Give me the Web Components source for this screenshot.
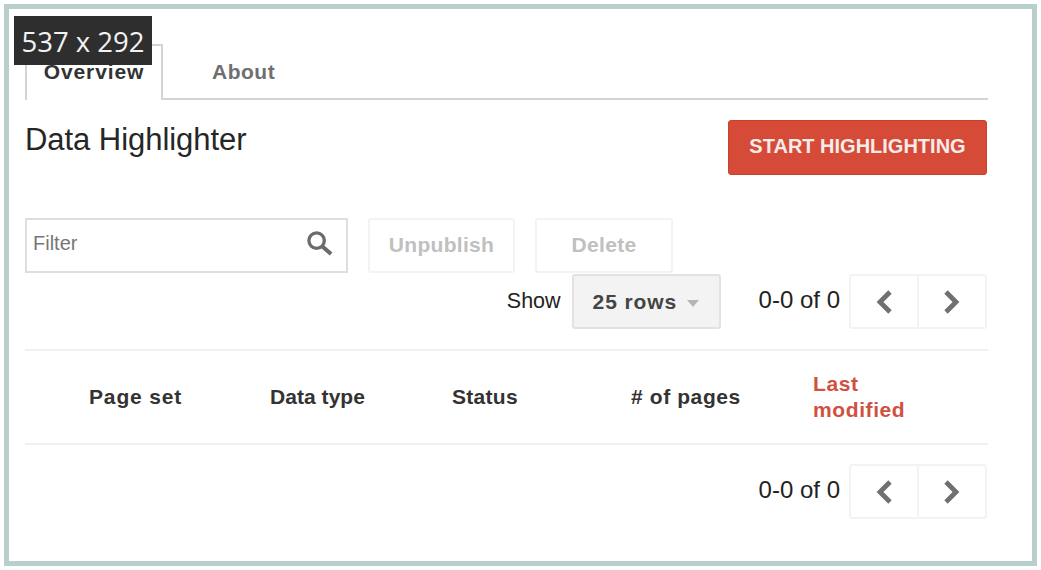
<!DOCTYPE html>
<html>
<head>
<meta charset="utf-8">
<style>
html, body { margin: 0; padding: 0; background: #fff; }
body { width: 1041px; height: 570px; overflow: hidden; font-family: "Liberation Sans", Arial, sans-serif; }
</style>
</head>
<body>
<dh-frame>
	<dh-tabs></dh-tabs>
	<dh-head></dh-head>
	<dh-toolbar></dh-toolbar>
	<dh-rowbar></dh-rowbar>
	<dh-columns></dh-columns>
	<dh-pager class="bottom"></dh-pager>
</dh-frame>
<script>
var chevron = function(d) {
	return `<svg width="20" height="26" viewBox="0 0 20 26"><path d="${d}" fill="none" stroke="#707070" stroke-width="4.8"/></svg>`
}
function define(name, css, html) {
	customElements.define(name, class extends HTMLElement {
		constructor() {
			super()
			var shadow = this.attachShadow({mode:'open'})
			shadow.innerHTML = `<style>${css}</style>${html}`
		}
	})
}
define('dh-frame', `
:host { display: block; box-sizing: border-box; position: relative; width: 1033px; height: 562px; margin: 4px 0 0 4px;
	border: 5px solid #b9cfcc; padding: 35px 44px 0 16px; background: #fff; }
.size { position: absolute; left: 5px; top: 7px; width: 138px; height: 49px; box-sizing: border-box; background: #2e2e2e; color: #f2f2f2;
	font: 27.5px/52px "Open Sans", sans-serif; text-align: center; white-space: nowrap; }
`, `<div class="size">537 x 292</div><slot></slot>`)
define('dh-tabs', `
:host { display: flex; height: 56px; box-sizing: border-box; border-bottom: 2px solid #d4d4d4; font: bold 21px/56px "Liberation Sans", sans-serif; letter-spacing: .5px; }
div { box-sizing: border-box; text-align: center; height: 56px; }
.on { width: 138px; border: 2px solid #d4d4d4; border-bottom: 0; background: #fff; color: #333; line-height: 52px; letter-spacing: .9px; }
.off { margin-left: 49px; color: #6f6f6f; }
`, `<div class="on">Overview</div><div class="off">About</div>`)
define('dh-head', `
:host { display: flex; justify-content: space-between; align-items: flex-start; padding-top: 20px; height: 98px; }
h1 { margin: 0; font: 31px/40px "Liberation Sans", sans-serif; letter-spacing: -.05px; color: #262626; }
button { width: 259px; height: 55px; margin-right: 1px; border: 1px solid #c9402e; border-radius: 3px; background: #d64a38; color: #f7ecea;
	font: bold 20px "Liberation Sans", sans-serif; padding: 0 0 2px; }
`, `<h1>Data Highlighter</h1><button>START HIGHLIGHTING</button>`)
define('dh-toolbar', `
:host { display: flex; gap: 20px; height: 56px; }
.filter { display: flex; align-items: center; justify-content: space-between; box-sizing: border-box; width: 323px; height: 55px; border: 2px solid #dedede;
	padding: 0 13px 5px 6px; color: #777; font: 20px "Liberation Sans", sans-serif; }
.btn { box-sizing: border-box; height: 55px; border: 2px solid #f3f3f3; border-radius: 3px; color: #c0c0c0; text-align: center;
	font: bold 21px/50px "Liberation Sans", sans-serif; letter-spacing: .3px; }
.a { width: 147px; } .b { width: 138px; }
`, `<div class="filter"><span>Filter</span><svg width="27" height="27" viewBox="0 0 28 28"><circle cx="11" cy="11" r="8" fill="none" stroke="#6b6b6b" stroke-width="3.4"/><path d="M17 17l9 8" stroke="#6b6b6b" stroke-width="4.2" fill="none"/></svg></div>
<div class="btn a">Unpublish</div><div class="btn b">Delete</div>`)
define('dh-pager', `
:host { display: flex; align-items: center; justify-content: flex-end; gap: 9px; padding-right: 1px; }
span { font: 24px "Liberation Sans", sans-serif; color: #222; padding-bottom: 3px; }
.box { display: flex; width: 138px; height: 55px; box-sizing: border-box; border: 2px solid #f3f3f3; border-radius: 3px; }
.box div { flex: 1; display: flex; align-items: center; justify-content: center; }
.box div + div { border-left: 2px solid #f3f3f3; }
`, `<span>0-0 of 0</span><div class="box"><div>${chevron('M16 3 L6 13 L16 23')}</div><div>${chevron('M4 3 L14 13 L4 23')}</div></div>`)
define('dh-rowbar', `
:host { display: flex; justify-content: flex-end; align-items: center; height: 55px; }
.show { font: 21.5px "Liberation Sans", sans-serif; color: #222; margin-right: 11px; }
.sel { display: flex; align-items: center; box-sizing: border-box; width: 149px; height: 55px; margin-right: 38px; padding-left: 19px; background: #f3f3f3;
	border: 2px solid #e2e2e2; border-radius: 3px; color: #444; font: bold 21px "Liberation Sans", sans-serif; letter-spacing: .9px; }
.arrow { width: 0; height: 0; margin-left: 10px; margin-top: 3px; border: 6px solid transparent; border-top: 7px solid #b5b5b5; border-bottom: 0; }
`, `<span class="show">Show</span><div class="sel">25 rows<i class="arrow"></i></div><dh-pager></dh-pager>`)
define('dh-columns', `
:host { display: grid; grid-template-columns: 181px 182px 179px 182px 1fr; align-items: center; height: 96px; margin-top: 20px; box-sizing: border-box;
	border-top: 2px solid #f0f0f0; border-bottom: 2px solid #f0f0f0; padding-left: 64px;
	font: bold 21px/26px "Liberation Sans", sans-serif; letter-spacing: .6px; color: #333; }
.sort { color: #d0513f; width: 110px; }
`, `<div style="letter-spacing:.85px">Page set</div><div style="letter-spacing:.05px">Data type</div><div style="letter-spacing:.3px">Status</div><div># of pages</div><div class="sort">Last modified</div>`)
</script>
<style>
dh-pager.bottom { margin-top: 19px; }
</style>
</body>
</html>
